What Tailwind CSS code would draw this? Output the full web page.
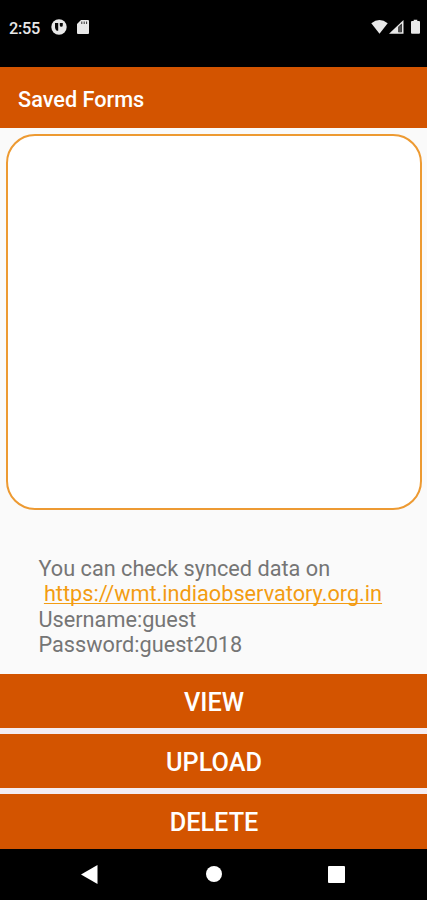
<!DOCTYPE html>
<html lang="en">
<head>
<meta charset="utf-8">
<title>Saved Forms</title>
<script src="https://cdn.jsdelivr.net/npm/@tailwindcss/browser@4"></script>
</head>
<body class="flex h-[900px] w-[427px] flex-col overflow-hidden bg-[#fafafa] font-['Roboto',sans-serif]">
  <div class="flex h-[67px] shrink-0 bg-black pt-[17px] pl-[9px] text-[#e8e8e8]">
    <span class="h-[22px] w-[42px] text-[16.300px] leading-[23px] font-medium whitespace-nowrap [letter-spacing:-0.3px]">2:55</span>
    <svg class="mt-[2px] h-4 w-4" viewBox="0 0 16 16"><circle cx="8" cy="8" r="7.700" fill="#e8e8e8"/><path d="M4 4h3.200v7.800H5.800C4.600 10.800 4 9.500 4 8zM8.800 4h3v2.300a1.500 1.500 0 0 1-3 0z" fill="#080808"/></svg>
    <svg class="mt-[3px] ml-[10px] h-[14px] w-3" viewBox="0 0 12 14"><path d="M4 0h7q1 0 1 1v12q0 1-1 1H1q-1 0-1-1V4z" fill="#e8e8e8"/><path d="M4.800 1.500v2.500M7.200 1.500v2.500M9.600 1.500v2.500" stroke="#333" stroke-width="1"/></svg>
    <div class="mt-[2px] ml-auto flex pr-[7.500px]">
      <svg class="h-4 w-[17px]" viewBox="0 0 17 16"><path d="M.3 4.200Q8.500-2.400 16.700 4.200L8.500 14.800z" fill="#e8e8e8"/></svg>
      <svg class="ml-px h-4 w-[15px]" viewBox="0 0 15 16"><path d="M0 14.800L14.500 1v13.800z" fill="#e8e8e8"/><path d="M9.300 7.800L12.800 4.500v8.800H9.300z" fill="#111"/><path d="M11 6.500v6.800" stroke="#888"/></svg>
      <svg class="ml-[7px] h-4 w-[9px]" viewBox="0 0 9 16"><path d="M2.700.8h3.600v1.200H8q1 0 1 1v10.800q0 1-1 1H1q-1 0-1-1V3q0-1 1-1h1.700z" fill="#e8e8e8"/></svg>
    </div>
  </div>
  <header class="flex h-[61px] shrink-0 items-center bg-[#d35400] pt-[5px] pl-[18px]">
    <h1 class="text-[21.700px] font-medium whitespace-nowrap text-white">Saved Forms</h1>
  </header>
  <main class="flex h-[546px] shrink-0 flex-col pt-[6px] pr-[5px] pl-[6px]">
    <div class="h-[376px] shrink-0 rounded-[29px] border-2 border-[#ed9a32] bg-white"></div>
    <div class="mt-[46px] pl-[32.500px] text-[21.700px] leading-[25.300px] whitespace-pre text-[#757575]"><p>You can check synced data on</p><p> <a class="text-[#f39c12] underline decoration-1 underline-offset-[2px] [text-decoration-skip-ink:none]">https://wmt.indiaobservatory.org.in</a></p><p>Username:guest</p><p>Password:guest2018</p></div>
  </main>
  <div class="flex h-[175px] shrink-0 flex-col gap-[6px] bg-[#f3edf2] text-[25.300px] font-medium text-white">
    <button class="h-[54px] w-full bg-[#d35400] pt-[4px] pl-px">VIEW</button>
    <button class="h-[54px] w-full bg-[#d35400] pt-[4px] pl-px">UPLOAD</button>
    <button class="h-[55px] w-full bg-[#d35400] pt-[3px] pl-px">DELETE</button>
  </div>
  <nav class="flex h-[51px] shrink-0 bg-black pt-[16px] pl-[81px]">
    <svg class="h-[19px] w-[17px]" viewBox="0 0 17 19"><path d="M0 9.500L16.500 0v19z" fill="white"/></svg>
    <div class="mt-px ml-[108px] h-4 w-4 rounded-full bg-white"></div>
    <div class="mt-px ml-[106px] h-[17px] w-[17px] rounded-[1px] bg-white"></div>
  </nav>
</body>
</html>
